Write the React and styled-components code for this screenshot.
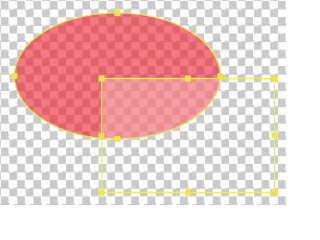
import React from 'react';
import styled, { createGlobalStyle } from 'styled-components';

const GlobalStyle = createGlobalStyle`
  html, body {
    margin: 0;
    padding: 0;
    overflow: hidden;
    background: #fff;
  }
`;

// transparent-canvas checkerboard, cells slightly over 8px like the source
const Canvas = styled.div`
  width: 286px;
  height: 205px;
  background: repeating-conic-gradient(#ffffff 0 25%, #cbcbcb 0 50%) 0.85px 0.85px / 16.3px 16.3px;
  display: flex;
`;

const Stage = styled.svg`
  display: block;
  width: 100%;
  height: 100%;
`;

const HANDLE = 6;
const ACCENT = '#e8e840';

const ellipse = { cx: 117.3, cy: 76, rx: 103, ry: 63 };
const sel = { x: 101.5, y: 78.5, w: 173, h: 114 };

function Handle({ x, y }) {
  return <rect x={x - HANDLE / 2} y={y - HANDLE / 2} width={HANDLE} height={HANDLE} fill={ACCENT} />;
}

export default function App() {
  const { cx, cy, rx, ry } = ellipse;
  const ellipseHandles = [
    [cx, cy - ry],
    [cx - rx, cy],
    [cx + rx, cy],
    [cx, cy + ry],
  ];
  const right = sel.x + sel.w;
  const bottom = sel.y + sel.h;
  const midX = sel.x + sel.w / 2;
  const midY = sel.y + sel.h / 2;
  const selHandles = [
    [sel.x, sel.y], [midX, sel.y], [right, sel.y],
    [sel.x, midY], [right, midY],
    [sel.x, bottom], [midX, bottom], [right, bottom],
  ];

  return (
    <>
      <GlobalStyle />
      <Canvas>
        <Stage viewBox="0 0 286 205">
          <defs>
            <clipPath id="shape">
              <ellipse cx={cx} cy={cy} rx={rx} ry={ry} />
            </clipPath>
          </defs>
          <ellipse cx={cx} cy={cy} rx={rx} ry={ry} fill="rgba(240, 22, 36, 0.58)" stroke={ACCENT} strokeWidth="1.2" />
          <rect x={sel.x} y={sel.y} width={sel.w} height={sel.h} fill="rgba(255, 255, 255, 0.28)" clipPath="url(#shape)" />
          <rect x={sel.x} y={sel.y} width={sel.w} height={sel.h} fill="none" stroke="#ecec5c" strokeWidth="1.2" />
          {ellipseHandles.map(([x, y], i) => <Handle key={'e' + i} x={x} y={y} />)}
          {selHandles.map(([x, y], i) => <Handle key={'s' + i} x={x} y={y} />)}
        </Stage>
      </Canvas>
    </>
  );
}
